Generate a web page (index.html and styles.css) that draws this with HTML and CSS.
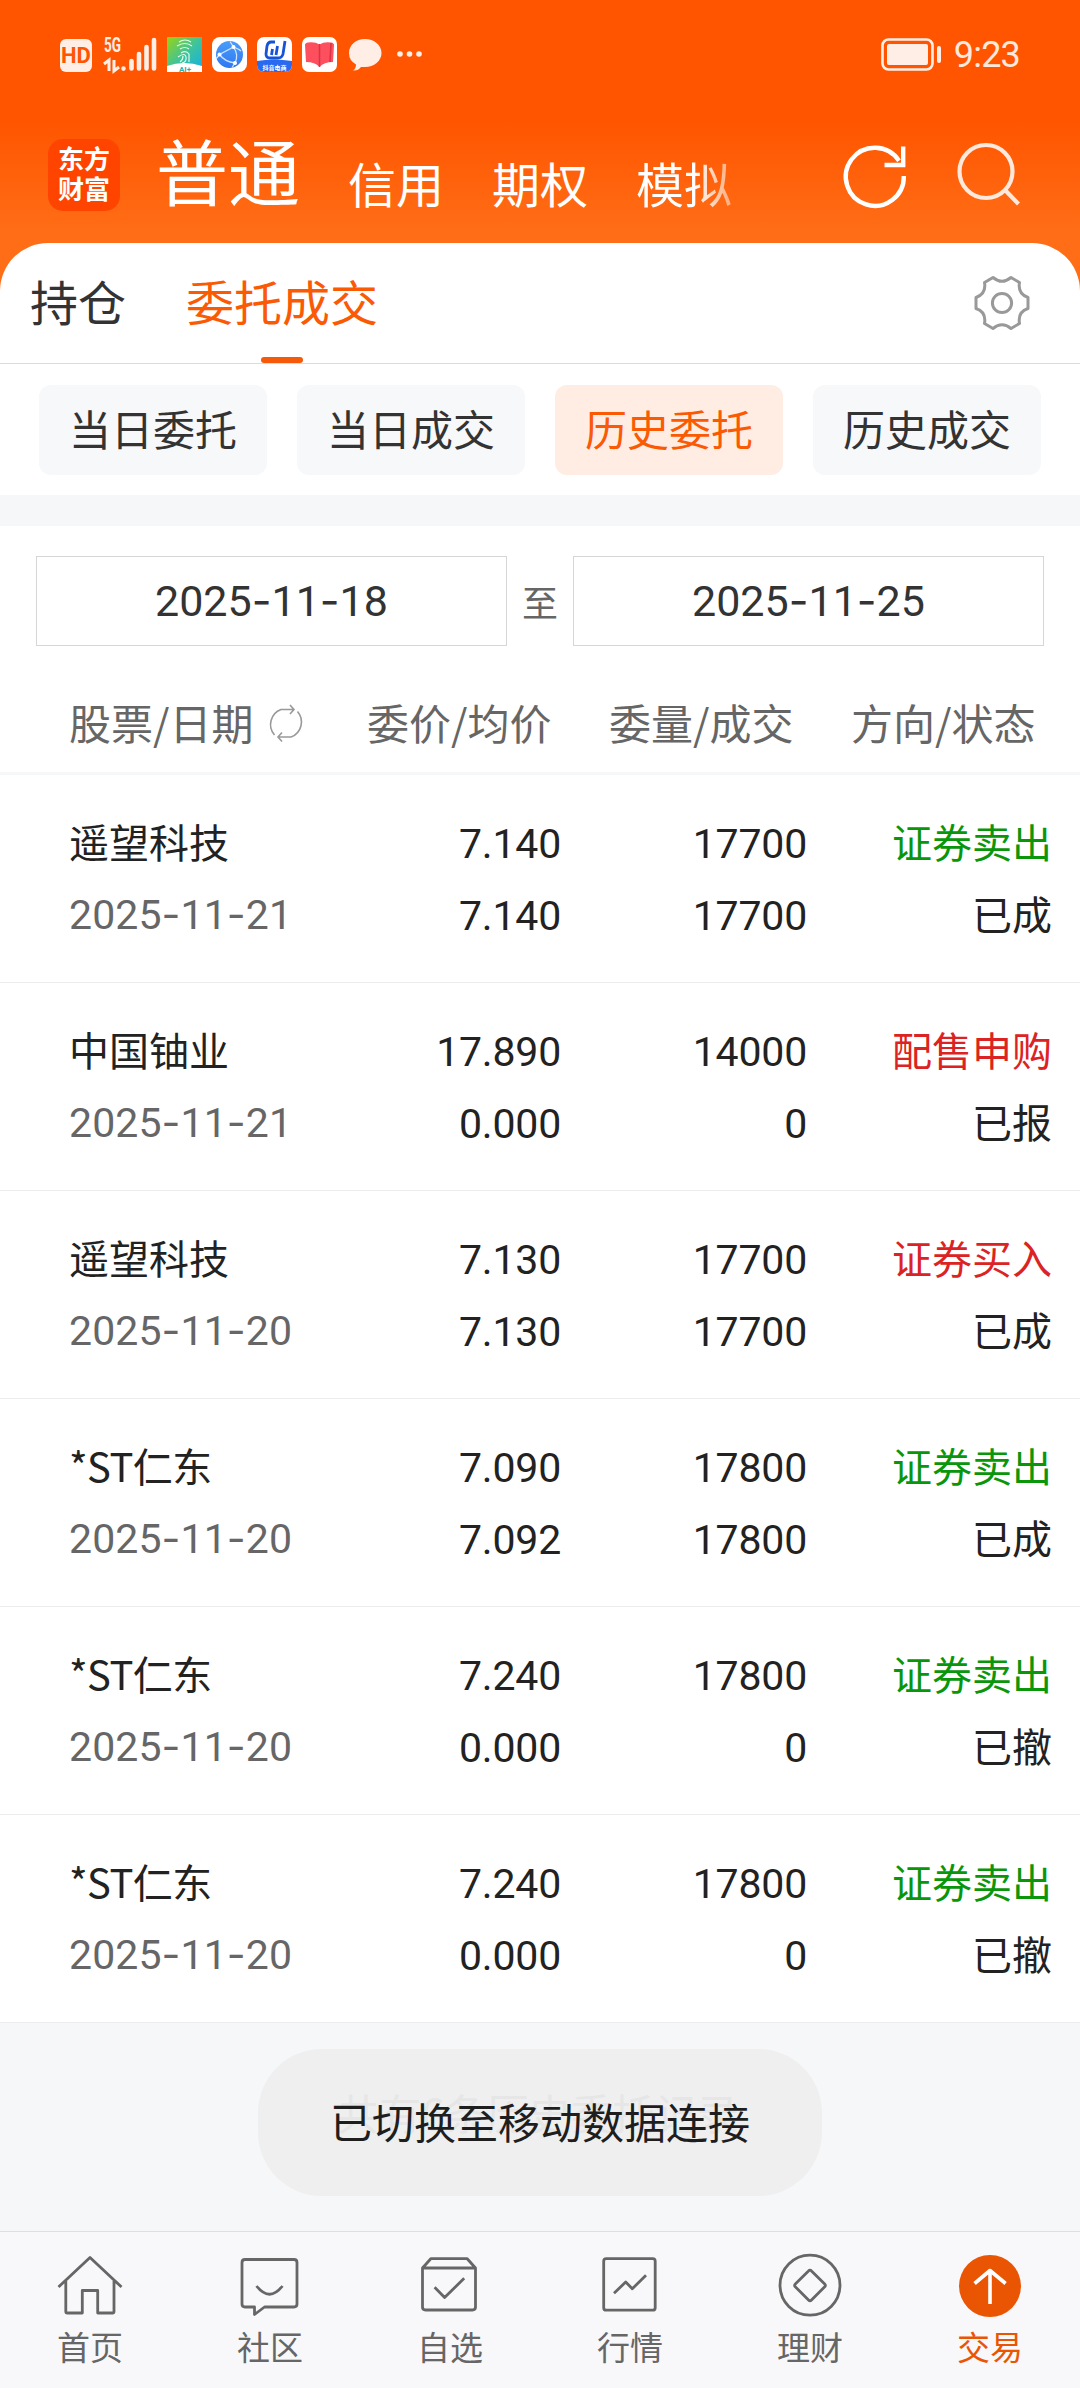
FILE: index.html
```
<!DOCTYPE html>
<html lang="zh-CN">
<head>
  <meta charset="UTF-8" />
  <meta name="viewport" content="width=device-width, initial-scale=1.0"/>
  <title>委托成交</title>
  <link rel="stylesheet" href="styles.css">
</head>
<body>
  <div class="app">
    <header class="top">
      <div class="status-bar">
        <svg class="status-icons" width="364" height="40" viewBox="0 0 364 40">
          <rect x="0" y="4" width="32" height="33" rx="6" fill="#ffeee6"/>
          <text x="16" y="28" class="hd-text" text-anchor="middle">HD</text>
          <text x="44" y="17" class="net-text" textLength="17" lengthAdjust="spacingAndGlyphs">5G</text>
          <path d="M44 29l5-4v11M54 25v11l5-4" fill="none" stroke="#ffeee6" stroke-width="3"/>
          <g stroke="#ffeee6" stroke-width="4.6" stroke-linecap="round">
            <path d="M63.500 33.500v.1M71.500 26v7.500M79 19v14.500M86.500 12v21.500M94 5v28.500"/>
          </g>
          <defs>
            <linearGradient id="finger" x1="0" y1="0" x2="1" y2="1">
              <stop offset="0" stop-color="#9bd312"/><stop offset=".5" stop-color="#3fc49a"/><stop offset="1" stop-color="#10aeee"/>
            </linearGradient>
            <linearGradient id="globe" x1="0" y1="0" x2="0" y2="1">
              <stop offset="0" stop-color="#4a9df8"/><stop offset="1" stop-color="#2f78f3"/>
            </linearGradient>
          </defs>
          <g transform="translate(107 2)">
            <rect width="35" height="35" fill="url(#finger)"/>
            <path d="M0 29q17-6 35 0v6H0z" fill="#fff"/>
            <path d="M12 5q6-4 12 0M10 9q8-5 15 0M13 12q5-3 9 0M14 16q5-3 8 1v8M11 20q7-5 8 0t-4 6M13 25q3-2 3-6" fill="none" stroke="#e4fbe9" stroke-width="1.200"/>
            <text x="18" y="34.500" class="ai-text" text-anchor="middle">AI+</text>
          </g>
          <g transform="translate(152 2)">
            <rect width="35" height="35" rx="8" fill="#fff"/>
            <circle cx="17.500" cy="17.500" r="13.500" fill="url(#globe)"/>
            <path d="M21.500 10L7.500 17.500Q13 25 23 26Q27 18 21.500 10L18 4.500M21.500 10Q27 12 29 14M7.500 17.500L4 22M23 26L20 30.500" fill="none" stroke="#cfe4ff" stroke-width="1.300"/>
            <g fill="#fff"><circle cx="21.500" cy="10" r="2"/><circle cx="7.500" cy="17.500" r="2"/><circle cx="23" cy="26" r="2"/></g>
          </g>
          <g transform="translate(197 2)">
            <rect width="35" height="35" rx="7" fill="#fff"/>
            <path d="M0 24q17-3 35 0v4a7 7 0 0 1-7 7H7a7 7 0 0 1-7-7z" fill="#2a6af0"/>
            <path d="M18 5h-4q-3 0-4 4l-1 8q0 4 4 4h8q4 0 5-4l2-13M15.500 12l-1 6M20.500 9l-1.500 9" fill="none" stroke="#1554d8" stroke-width="2.800"/>
            <text x="17.500" y="33" class="dou-text" text-anchor="middle">抖音电商</text>
          </g>
          <g transform="translate(242 2)">
            <rect width="35" height="35" rx="7" fill="#fff"/>
            <path d="M3 8q0-2 3-2.500q7-1 11.500 2q4.500-3 11.500-2q3 .5 3 2.500l-1 17q-9 0-13.500 5Q13 25 4 25z" fill="#fd4f5e"/>
            <path d="M17.500 7v23M29 6l-1 19" stroke="#d93345" stroke-width="1.500" fill="none"/>
          </g>
          <path d="M305 4c9 0 16.500 6 16.500 14S314 32 305 32q-2 0-4 0-3 4-8 3.500 3-2 3-6-7-4-7-11.500C289 10 296 4 305 4z" fill="#ffeee6"/>
          <g fill="#ffeee6"><circle cx="340" cy="19" r="2.800"/><circle cx="349.500" cy="19" r="2.800"/><circle cx="359" cy="19" r="2.800"/></g>
        </svg>
        <div class="status-right">
          <svg width="62" height="34" viewBox="0 0 62 34">
            <rect x="1.500" y="1.500" width="50" height="30" rx="6" fill="none" stroke="#ffeee6" stroke-width="2.600"/>
            <rect x="6" y="6" width="41" height="21" rx="2" fill="#ffeee6"/>
            <rect x="56" y="8" width="4" height="17" rx="2" fill="#ffeee6"/>
          </svg>
          <span class="clock">9:23</span>
        </div>
      </div>
      <div class="nav-bar">
        <div class="logo"><span>东方</span><span>财富</span></div>
        <nav class="markets">
          <span class="market current">普通</span>
          <span class="market">信用</span>
          <span class="market">期权</span>
          <span class="market fade">模拟</span>
        </nav>
        <div class="nav-actions">
          <svg width="66" height="66" viewBox="0 0 66 66" fill="none" stroke="#fff" stroke-width="4.400">
            <path d="M61.800 34A29 29 0 1 1 57 18.800"/>
            <path d="M61.200 4.500V23H42.500"/>
          </svg>
          <svg width="66" height="66" viewBox="0 0 66 66" fill="none" stroke="#ffe8dc" stroke-width="4.200">
            <circle cx="30" cy="29.500" r="26.500"/>
            <path d="M49.500 48.500L62.500 62"/>
          </svg>
        </div>
      </div>
    </header>

    <main class="sheet">
      <div class="tabs">
        <span class="tab">持仓</span>
        <span class="tab active">委托成交</span>
        <svg class="gear" width="58" height="58" viewBox="-29 -29 58 58" fill="none" stroke="#999" stroke-width="3" stroke-linejoin="round">
          <path d="M-9-25.500Q0-18 9-25.500L17.500-20.500Q15.500-9 26-5.500V5.500Q15.500 9 17.500 20.500L9 25.500Q0 18-9 25.500L-17.500 20.500Q-15.500 9-26 5.500V-5.500Q-15.500-9-17.500-20.500Z"/>
          <circle r="9.600"/>
        </svg>
      </div>
      <div class="chips">
        <span class="chip">当日委托</span>
        <span class="chip">当日成交</span>
        <span class="chip active">历史委托</span>
        <span class="chip">历史成交</span>
      </div>
      <div class="divider"></div>
      <div class="range">
        <div class="date-box">2025<i>-</i>11<i>-</i>18</div>
        <span class="to">至</span>
        <div class="date-box">2025<i>-</i>11<i>-</i>25</div>
      </div>
      <div class="list-head">
        <span class="col-stock">股票/日期
          <svg width="38" height="38" viewBox="0 0 38 38" fill="none" stroke="#999" stroke-width="1.600">
            <path d="M7.500 31A16 16 0 0 1 14 5.500H26.500M23 1L27 5.500L23 10"/>
            <path d="M30.500 7.500A16 16 0 0 1 24 33H11.500M15 28.500L11 33L15 37.500"/>
          </svg>
        </span>
        <span>委价/均价</span>
        <span>委量/成交</span>
        <span>方向/状态</span>
      </div>
      <div class="orders">
        <div class="order">
          <span class="name">遥望科技</span><span class="num">7.140</span><span class="num">17700</span><span class="side sell">证券卖出</span>
          <span class="date">2025<i>-</i>11<i>-</i>21</span><span class="num">7.140</span><span class="num">17700</span><span class="side">已成</span>
        </div>
        <div class="order">
          <span class="name">中国铀业</span><span class="num">17.890</span><span class="num">14000</span><span class="side buy">配售申购</span>
          <span class="date">2025<i>-</i>11<i>-</i>21</span><span class="num">0.000</span><span class="num">0</span><span class="side">已报</span>
        </div>
        <div class="order">
          <span class="name">遥望科技</span><span class="num">7.130</span><span class="num">17700</span><span class="side buy">证券买入</span>
          <span class="date">2025<i>-</i>11<i>-</i>20</span><span class="num">7.130</span><span class="num">17700</span><span class="side">已成</span>
        </div>
        <div class="order">
          <span class="name st">*ST仁东</span><span class="num">7.090</span><span class="num">17800</span><span class="side sell">证券卖出</span>
          <span class="date">2025<i>-</i>11<i>-</i>20</span><span class="num">7.092</span><span class="num">17800</span><span class="side">已成</span>
        </div>
        <div class="order">
          <span class="name st">*ST仁东</span><span class="num">7.240</span><span class="num">17800</span><span class="side sell">证券卖出</span>
          <span class="date">2025<i>-</i>11<i>-</i>20</span><span class="num">0.000</span><span class="num">0</span><span class="side">已撤</span>
        </div>
        <div class="order">
          <span class="name st">*ST仁东</span><span class="num">7.240</span><span class="num">17800</span><span class="side sell">证券卖出</span>
          <span class="date">2025<i>-</i>11<i>-</i>20</span><span class="num">0.000</span><span class="num">0</span><span class="side">已撤</span>
        </div>
      </div>
    </main>

    <div class="list-end">
      <span class="summary">共有6条历史委托记录</span>
      <div class="toast">已切换至移动数据连接</div>
    </div>

    <footer class="tab-bar">
      <div class="item">
        <svg width="66" height="66" viewBox="0 0 66 66">
          <path d="M1.500 35L33 5.500L64.500 35M8.800 29V59.500Q8.800 61 10.300 61H25.300V38.500H40.700V61H55.500Q57 61 57 59.500V29"/>
        </svg>
        <span>首页</span>
      </div>
      <div class="item">
        <svg width="66" height="66" viewBox="0 0 66 66">
          <path d="M8 7.500H57Q60 7.500 60 10.500V52Q60 55 57 55H27.500L17.500 62.500V55H8Q5 55 5 52V10.500Q5 7.500 8 7.500ZM19.500 34Q32.500 50.500 45.500 34"/>
        </svg>
        <span>社区</span>
      </div>
      <div class="item">
        <svg width="66" height="66" viewBox="0 0 66 66">
          <path d="M5.500 16L13.800 6.700H50.200L58.500 16V55Q58.500 58 55.500 58H8.500Q5.500 58 5.500 55ZM5.500 16H58.500M17.600 35.300L27.600 45.500L47.200 26.300"/>
        </svg>
        <span>自选</span>
      </div>
      <div class="item">
        <svg width="66" height="66" viewBox="0 0 66 66">
          <rect x="6.700" y="6.700" width="51.500" height="51.500" rx="2.500"/>
          <path d="M17 41.300L28.700 30L35.300 36.700L49 23.300"/>
        </svg>
        <span>行情</span>
      </div>
      <div class="item">
        <svg width="66" height="66" viewBox="0 0 66 66">
          <circle cx="33" cy="33.200" r="30"/>
          <path d="M31.500 19Q33 17.300 34.500 19L47.700 32Q49 33.400 47.700 34.800L34.500 48Q33 49.500 31.500 48L18.300 34.800Q17 33.400 18.300 32Z"/>
        </svg>
        <span>理财</span>
      </div>
      <div class="item active">
        <svg width="66" height="66" viewBox="0 0 66 66">
          <circle class="disc" cx="33" cy="34" r="31"/>
          <path d="M33 19V52M17.600 31.500L33 18.500L48.600 31.500"/>
        </svg>
        <span>交易</span>
      </div>
    </footer>
  </div>
</body>
</html>
```
FILE: styles.css
```
* { margin: 0; padding: 0; box-sizing: border-box; }
body {
  font-family: 'Noto Sans CJK SC', 'Noto Sans', sans-serif;
  background: #f6f7f9;
  color: #222;
}
svg { display: block; flex: none; overflow: visible; }
.app {
  width: 1080px;
  height: 2388px;
  display: flex;
  flex-direction: column;
  overflow: hidden;
}

/* header */
.top {
  height: 291px;
  background: linear-gradient(180deg, #ff5500 0, #ff5500 120px, #ff6e17 235px, #ff6e17 100%);
}
.status-bar {
  height: 108px;
  padding: 35px 60px 0 60px;
  display: flex;
  justify-content: space-between;
  align-items: flex-start;
}
.hd-text { font: 700 22px Roboto, sans-serif; fill: #ff5500; }
.net-text { font: 700 21px Roboto, sans-serif; fill: #ffeee6; }
.ai-text { font: 700 8px Roboto, sans-serif; fill: #22b3b0; }
.dou-text { font: 700 6px 'Noto Sans CJK SC', sans-serif; fill: #fff; }
.status-right {
  display: flex;
  align-items: center;
  gap: 11px;
  padding-top: 3px;
}
.clock {
  font: 400 36px/34px Roboto, sans-serif;
  letter-spacing: -0.8px;
  color: #ffe8dc;
}
.nav-bar {
  display: flex;
  padding: 31px 58px 0 48px;
}
.logo {
  width: 72px;
  height: 72px;
  border-radius: 15px;
  background: #ff4400;
  color: #fff;
  font-size: 26px;
  font-weight: 700;
  line-height: 30px;
  padding-top: 4px;
  display: flex;
  flex-direction: column;
  align-items: center;
}
.markets {
  display: flex;
  align-items: flex-start;
  gap: 48px;
  margin-left: 36px;
  margin-top: -6px;
  color: #fff;
}
.market {
  font-size: 48px;
  line-height: 72px;
  margin-top: 13px;
}
.market.current { font-size: 72px; margin-top: 0; }
.market.fade {
  background: linear-gradient(90deg, #fff 60%, #ff8a45 115%);
  -webkit-background-clip: text;
  background-clip: text;
  color: transparent;
}
.nav-actions {
  display: flex;
  gap: 48px;
  margin-left: auto;
  padding-top: 3px;
}

/* white sheet */
.sheet {
  background: #fff;
  border-radius: 48px 48px 0 0;
  margin-top: -48px;
}
.tabs {
  height: 121px;
  padding: 0 49px 0 30px;
  display: flex;
  align-items: center;
  border-bottom: 1px solid #dcdcdc;
}
.tab {
  position: relative;
  font-size: 48px;
  line-height: 120px;
  margin-top: -6px;
  margin-right: 60px;
  color: #333;
}
.tab.active { color: #fb5a05; }
.tab.active::after {
  content: '';
  position: absolute;
  left: 50%;
  bottom: -3px;
  width: 42px;
  height: 6px;
  margin-left: -21px;
  border-radius: 3px;
  background: #f55a0a;
}
.gear { margin-left: auto; }
.chips {
  display: flex;
  gap: 30px;
  padding: 21px 39px 20px;
}
.chip {
  flex: 1;
  height: 90px;
  line-height: 86px;
  border-radius: 12px;
  background: #f7f8fa;
  color: #333;
  font-size: 42px;
  text-align: center;
}
.chip.active { background: #ffede4; color: #fb5a05; }
.divider { height: 31px; background: #f6f7f9; }
.range {
  display: flex;
  align-items: center;
  padding: 30px 36px 0;
}
.date-box {
  flex: 1;
  height: 90px;
  border: 1px solid #d6d6d6;
  font: 400 43px/88px Roboto, sans-serif;
  color: #333;
  text-align: center;
}
.date-box i, .date i {
  font-family: Inter, sans-serif;
  font-style: normal;
  line-height: 1;
}
.to {
  width: 66px;
  color: #666;
  font-size: 36px;
  line-height: 84px;
  text-align: center;
}
.list-head {
  display: flex;
  align-items: center;
  height: 129px;
  border-bottom: 3px solid #f6f7f9;
  padding: 26px 44px 0 69px;
  font-size: 42px;
  line-height: 100px;
  color: #666;
}
.list-head span { width: 242px; }
.list-head span:last-child { width: auto; }
.list-head .col-stock {
  width: 298px;
  display: flex;
  align-items: center;
  gap: 14px;
}
.col-stock svg { margin-top: 2px; }

/* orders */
.order {
  display: grid;
  grid-template-columns: 260px 232px 246px 245px;
  grid-auto-rows: 72px;
  height: 208px;
  padding: 32px 0 0 69px;
  border-bottom: 1px solid #ececee;
  font-size: 40px;
  line-height: 68px;
}
.name.st { letter-spacing: -0.6px; }
.num {
  font: 400 41px/74px Roboto, sans-serif;
  letter-spacing: -0.2px;
  text-align: right;
}
.date {
  font: 400 41px/73px Roboto, sans-serif;
  letter-spacing: 0.1px;
  color: #666;
}
.side { text-align: right; }
.sell { color: #0a960a; }
.buy { color: #dc2323; }

.list-end {
  position: relative;
  flex: 1;
  background: #f6f7f9;
}
.summary {
  position: absolute;
  top: 58px;
  left: 0;
  width: 1076px;
  font-size: 42px;
  text-align: center;
  color: #888;
}
.toast {
  position: absolute;
  top: 26px;
  left: 258px;
  width: 564px;
  height: 147px;
  border-radius: 64px;
  background: rgba(238, 238, 238, 0.92);
  color: #1e1e1e;
  font-size: 42px;
  line-height: 143px;
  text-align: center;
}

/* bottom bar */
.tab-bar {
  height: 157px;
  display: flex;
  border-top: 1px solid #dedfe1;
  background: #f8f8fa;
}
.item {
  flex: 1;
  display: flex;
  flex-direction: column;
  align-items: center;
  padding-top: 20px;
  font-size: 33px;
  line-height: 40px;
  color: #666;
}
.item span { margin-top: 8px; }
.item svg {
  fill: none;
  stroke: #666;
  stroke-width: 2.8;
  stroke-linejoin: round;
}
.item.active { color: #ea5504; }
.item.active svg { stroke: #fff; stroke-width: 3.6; }
.item .disc { fill: #ea5504; stroke: none; }
```
